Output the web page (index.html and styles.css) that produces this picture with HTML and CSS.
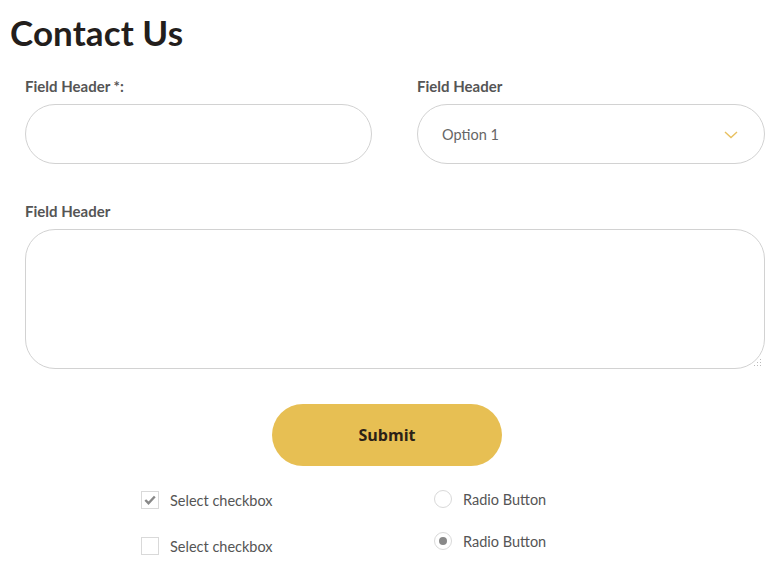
FILE: index.html
```html
<!DOCTYPE html>
<html>
<head>
<meta charset="utf-8">
<link rel="stylesheet" href="styles.css">
</head>
<body>
<div class="page">
  <h1 class="title">Contact Us</h1>
  <form class="form">
    <div class="row two">
      <div class="field">
        <label class="label">Field Header *:</label>
        <input class="input" type="text">
      </div>
      <div class="field">
        <label class="label">Field Header</label>
        <div class="select">
          <span class="select-text">Option 1</span>
          <svg class="chev" width="14" height="8" viewBox="0 0 14 8"><path d="M1 1 L7 6.5 L13 1" fill="none" stroke="#e8c060" stroke-width="1.4"/></svg>
        </div>
      </div>
    </div>
    <div class="row">
      <div class="field">
        <label class="label">Field Header</label>
        <div class="ta-wrap">
          <textarea class="textarea"></textarea>
          <span class="grip"></span>
        </div>
      </div>
    </div>
    <div class="actions">
      <button type="button" class="submit">Submit</button>
    </div>
    <div class="choices">
      <div class="col col-check">
        <div class="opt"><span class="box checked"><svg width="12" height="10" viewBox="0 0 12 10"><path d="M1.3 5 L4.5 8.2 L10.8 1.5" fill="none" stroke="#888" stroke-width="2.4"/></svg></span><span class="opt-text">Select checkbox</span></div>
        <div class="opt opt2"><span class="box"></span><span class="opt-text">Select checkbox</span></div>
      </div>
      <div class="col col-radio">
        <div class="opt"><span class="radio"></span><span class="opt-text">Radio Button</span></div>
        <div class="opt opt2r"><span class="radio on"></span><span class="opt-text">Radio Button</span></div>
      </div>
    </div>
  </form>
</div>
</body>
</html>
```
FILE: styles.css
```css
* { box-sizing: border-box; }
body {
  margin: 0;
  background: #fff;
  font-family: "Lato", "Open Sans", sans-serif;
  color: #555;
}
.page { padding: 8px 10px 0 10px; }
.title {
  margin: 0;
  font-size: 35px;
  line-height: 48px;
  font-weight: 700;
  color: #231e1c;
  letter-spacing: 0.1px;
}
.form { padding: 21px 19px 0 15px; }
.row.two {
  display: grid;
  grid-template-columns: 347px 348px;
  column-gap: 45px;
}
.field { display: flex; flex-direction: column; }
.label {
  font-size: 15px;
  font-weight: 700;
  color: #555;
  line-height: 18px;
  margin-bottom: 9px;
}
.input, .select {
  height: 60px;
  border: 1px solid #d2d2d2;
  border-radius: 30px;
  background: #fff;
  outline: none;
}
.select {
  display: flex;
  align-items: center;
  justify-content: space-between;
  padding: 0 26px 0 24px;
}
.select-text { font-size: 14.5px; color: #666; }
.chev { margin-top: 1px; }
.row + .row { margin-top: 38px; }
.ta-wrap { position: relative; width: 740px; height: 140px; }
.textarea {
  display: block;
  width: 740px;
  height: 140px;
  border: 1px solid #d2d2d2;
  border-radius: 30px;
  resize: none;
  outline: none;
}
.grip {
  position: absolute;
  right: 4px;
  bottom: 3px;
  width: 8px;
  height: 8px;
  background:
    radial-gradient(circle, #bbb 0.8px, transparent 1px) 0 0 / 3px 3px;
  clip-path: polygon(100% 0, 100% 100%, 0 100%);
}
.actions {
  display: flex;
  justify-content: center;
  margin-top: 35px;
  padding-right: 6px;
}
.submit {
  width: 230px;
  height: 62px;
  border: none;
  border-radius: 31px;
  background: #e7bf53;
  font-family: "Open Sans", sans-serif;
  font-weight: 700;
  font-size: 16px;
  color: #2b2117;
}
.choices {
  display: flex;
  margin-top: 25px;
  padding-left: 116px;
}
.col { display: flex; flex-direction: column; }
.col-check { width: 293px; }
.opt { display: flex; align-items: center; height: 18px; }
.opt2 { margin-top: 28px; }
.opt2r { margin-top: 24px; }
.col-radio { margin-top: -1px; }
.box {
  width: 18px; height: 18px;
  border: 1px solid #d9d9d9;
  background: #fff;
  display: flex; align-items: center; justify-content: center;
  margin-right: 11px;
}
.radio {
  width: 18px; height: 18px;
  border: 1px solid #d9d9d9;
  border-radius: 50%;
  margin-right: 11px;
  display: flex; align-items: center; justify-content: center;
}
.radio.on::after {
  content: "";
  width: 8px; height: 8px;
  border-radius: 50%;
  background: #888;
}
.opt-text { font-size: 14.5px; color: #555; }
```
